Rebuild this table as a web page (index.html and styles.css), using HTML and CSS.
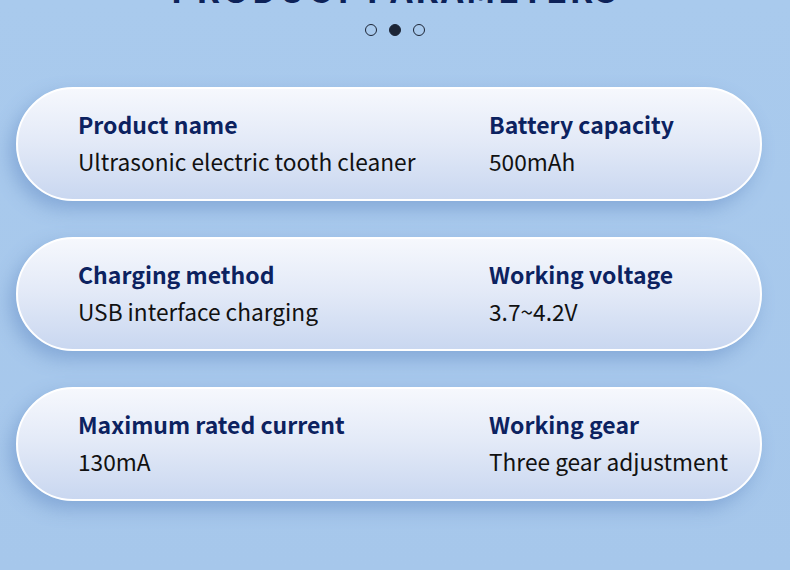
FILE: index.html
```html
<!DOCTYPE html>
<html>
<head>
<meta charset="utf-8">
<link rel="stylesheet" href="styles.css">
</head>
<body>
<main class="page">
  <h1 class="title">PRODUCT PARAMETERS</h1>
  <div class="dots"><span class="dot"></span><span class="dot active"></span><span class="dot"></span></div>
  <section class="cards">
    <div class="card">
      <div class="cell"><div class="label">Product name</div><div class="value">Ultrasonic electric tooth cleaner</div></div>
      <div class="cell"><div class="label">Battery capacity</div><div class="value">500mAh</div></div>
    </div>
    <div class="card">
      <div class="cell"><div class="label">Charging method</div><div class="value">USB interface charging</div></div>
      <div class="cell"><div class="label">Working voltage</div><div class="value">3.7~4.2V</div></div>
    </div>
    <div class="card">
      <div class="cell"><div class="label">Maximum rated current</div><div class="value">130mA</div></div>
      <div class="cell"><div class="label">Working gear</div><div class="value">Three gear adjustment</div></div>
    </div>
  </section>
</main>
</body>
</html>
```

FILE: styles.css
```css
html, body {
  margin: 0;
  padding: 0;
}
body {
  width: 790px;
  height: 570px;
  overflow: hidden;
  background: linear-gradient(180deg, #a9caed 0%, #a6c7eb 100%);
  font-family: "Noto Sans CJK SC", "Noto Sans", sans-serif;
}
.page {
  display: flex;
  flex-direction: column;
  align-items: center;
}
.title {
  margin: -32px 0 0 0;
  height: 40px;
  line-height: 40px;
  font-size: 35px;
  font-weight: 700;
  letter-spacing: 2.3px;
  color: #0d2258;
  white-space: nowrap;
}
.dots {
  display: flex;
  gap: 12px;
  margin-top: 16px;
  height: 12px;
}
.dot {
  width: 12px;
  height: 12px;
  box-sizing: border-box;
  border: 1.5px solid #1c2536;
  border-radius: 50%;
}
.dot.active {
  background: #1c2536;
}
.cards {
  align-self: flex-start;
  margin: 51px 0 0 16px;
  display: flex;
  flex-direction: column;
  gap: 36px;
}
.card {
  box-sizing: border-box;
  width: 746px;
  height: 114px;
  border: 2px solid #ffffff;
  border-radius: 57px;
  background: linear-gradient(180deg, #f6f8fd 0%, #e2e9f7 50%, #c9d7f0 100%);
  box-shadow: -6px 8px 18px rgba(90, 130, 190, 0.45);
  display: grid;
  grid-template-columns: 411px 1fr;
  padding: 17px 0 0 60px;
}
.label {
  font-size: 23px;
  font-weight: 700;
  color: #0c2260;
  line-height: 36px;
}
.value {
  font-size: 22.7px;
  color: #111111;
  line-height: 36px;
  margin-top: 2px;
}
```
